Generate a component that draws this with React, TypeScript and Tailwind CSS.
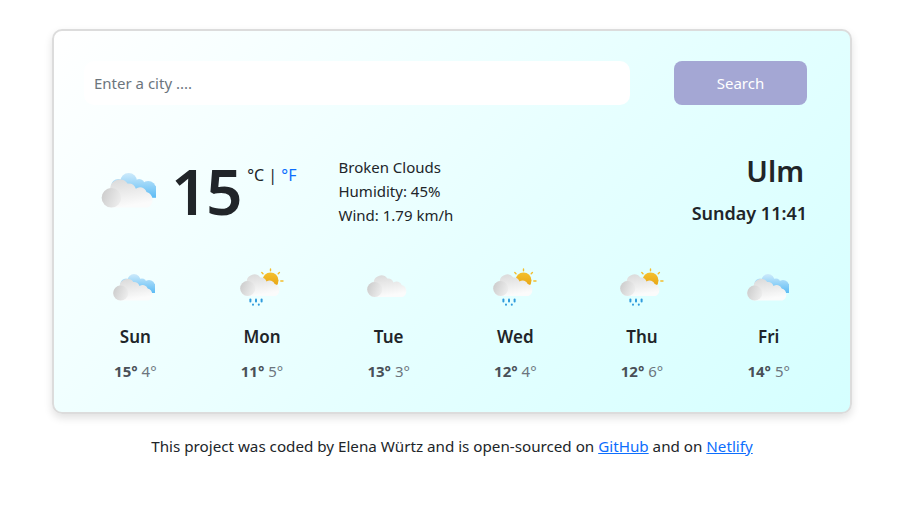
import React from 'react';

const Defs = () => (
    <svg width="0" height="0" className="absolute">
        <defs>
            <linearGradient id="blue" gradientUnits="userSpaceOnUse" x1="0" y1="7" x2="0" y2="25">
                <stop offset="0" stopColor="#cdeafb" />
                <stop offset="1" stopColor="#62bef5" />
            </linearGradient>
            <linearGradient id="body" x1="0" y1="0" x2="0.3" y2="1">
                <stop offset="0" stopColor="#d8d8d8" />
                <stop offset="1" stopColor="#fbfbfb" />
            </linearGradient>
            <linearGradient id="puff" x1="0" y1="0" x2="1" y2="0.4">
                <stop offset="0" stopColor="#c9c9c9" />
                <stop offset="1" stopColor="#ebebeb" />
            </linearGradient>
            <linearGradient id="sun" x1="0" y1="0" x2="0" y2="1">
                <stop offset="0" stopColor="#f4c02e" />
                <stop offset="1" stopColor="#e69f10" />
            </linearGradient>
        </defs>
    </svg>
);

const Cloud: React.FC<{ dy?: number }> = ({ dy = 0 }) => (
    <g transform={`translate(0 ${dy})`}>
        <path
            fill="url(#body)"
            d="M8.7 29 a7.5 7.5 0 0 1 -1 -14.9 a7.5 7.5 0 0 1 13.6 -3.5 a6 6 0 0 1 6.2 4 a5.2 5.2 0 0 1 8.2 2.4 a6.4 6.4 0 0 1 0.8 12 Z"
        />
        <circle cx="8.7" cy="21.5" r="7.5" fill="url(#puff)" />
    </g>
);

const BlueCloud = () => (
    <g fill="url(#blue)">
        <circle cx="22" cy="13.5" r="6.5" />
        <circle cx="14" cy="17" r="5.5" />
        <circle cx="30" cy="16" r="4.5" />
        <circle cx="37" cy="19" r="6" />
        <rect x="14" y="17" width="29" height="9" />
    </g>
);

const Sun = () => (
    <g stroke="#f4bd2c" strokeWidth="1.4" strokeLinecap="round">
        <line x1="31.5" y1="2" x2="31.5" y2="3.8" />
        <line x1="22.8" y1="5.5" x2="24" y2="6.7" />
        <line x1="40.4" y1="5.5" x2="39.2" y2="6.7" />
        <line x1="41.8" y1="14" x2="44" y2="14" />
        <circle cx="31.5" cy="13.5" r="8" fill="url(#sun)" stroke="none" />
    </g>
);

const Rain = () => (
    <g fill="#2f9bdc">
        <rect x="10.4" y="31.5" width="2" height="4" rx="1" />
        <rect x="16" y="31.5" width="2" height="4" rx="1" />
        <rect x="21.6" y="31.5" width="2" height="4" rx="1" />
        <rect x="13" y="36.5" width="2" height="2.2" rx="1" />
        <rect x="18.8" y="36.5" width="2" height="2.2" rx="1" />
    </g>
);

type Kind = 'broken' | 'rain' | 'cloud';

const WeatherIcon: React.FC<{ kind: Kind; className: string }> = ({ kind, className }) => (
    <svg viewBox="0 0 46 40" className={className}>
        {kind === 'broken' && (
            <>
                <BlueCloud />
                <Cloud dy={4.5} />
            </>
        )}
        {kind === 'rain' && (
            <>
                <Sun />
                <Cloud />
                <Rain />
            </>
        )}
        {kind === 'cloud' && <Cloud dy={1} />}
    </svg>
);

const forecast: { day: string; hi: number; lo: number; kind: Kind }[] = [
    { day: 'Sun', hi: 15, lo: 4, kind: 'broken' },
    { day: 'Mon', hi: 11, lo: 5, kind: 'rain' },
    { day: 'Tue', hi: 13, lo: 3, kind: 'cloud' },
    { day: 'Wed', hi: 12, lo: 4, kind: 'rain' },
    { day: 'Thu', hi: 12, lo: 6, kind: 'rain' },
    { day: 'Fri', hi: 14, lo: 5, kind: 'broken' },
];

export default function App() {
    return (
        <div className="h-[508px] overflow-hidden bg-white pt-[29px] font-['Noto_Sans','Open_Sans',sans-serif] text-[15px] text-[#212529]">
            <Defs />
            <div className="ml-[52px] h-[385px] w-[800px] rounded-[10px] border-2 border-[#dcdcdc] bg-[linear-gradient(135deg,#ffffff_0%,#e6ffff_55%,#d5ffff_100%)] pl-[30px] pr-[43px] pt-[30px] shadow-[0_4px_8px_rgba(0,0,0,0.12)]">
                <div className="flex h-[44px] gap-[44px]">
                    <div className="flex w-[546px] items-center rounded-[10px] bg-white pl-[10px] text-[#6c757d]">
                        Enter a city ....
                    </div>
                    <button className="w-[133px] rounded-[8px] bg-[#a4a7d4] text-white">Search</button>
                </div>

                <div className="mt-[45px] flex h-[88px] items-start">
                    <WeatherIcon kind="broken" className="ml-[16px] mt-[14px] h-[52px] w-[60px]" />
                    <div className="ml-[11px] -mt-[3px] text-[64px] font-semibold leading-[88px] tracking-[-1.5px]">15</div>
                    <div className="ml-[6px] mt-[12px] text-[16px] leading-[27px]">
                        °C | <span className="text-[#0d6efd]">°F</span>
                    </div>
                    <div className="ml-[42px] mt-[5px] leading-[24px]">
                        <div>Broken Clouds</div>
                        <div>Humidity: 45%</div>
                        <div>Wind: 1.79 km/h</div>
                    </div>
                    <div className="ml-auto text-right">
                        <div className="mr-[3px] mt-[1px] text-[29px] font-semibold leading-[40px]">Ulm</div>
                        <div className="mt-[10px] text-[18px] font-semibold leading-[24px]">Sunday 11:41</div>
                    </div>
                </div>

                <div className="-ml-[12px] mt-[29px] grid w-[760px] grid-cols-6">
                    {forecast.map(f => (
                        <div key={f.day} className="flex flex-col items-center">
                            <WeatherIcon kind={f.kind} className="h-[40px] w-[46px]" />
                            <div className="mt-[18px] text-[17px] font-semibold leading-[24px]">{f.day}</div>
                            <div className="mt-[10px] leading-[24px]">
                                <span className="font-bold text-[#495057]">{f.hi}°</span>{' '}
                                <span className="text-[#6c757d]">{f.lo}°</span>
                            </div>
                        </div>
                    ))}
                </div>
            </div>
            <p className="mt-[20px] ml-[52px] w-[800px] text-center text-[15.2px] leading-[24px]">
                This project was coded by Elena Würtz and is open-sourced on{' '}
                <a className="text-[#0d6efd] underline" href="#">GitHub</a> and on{' '}
                <a className="text-[#0d6efd] underline" href="#">Netlify</a>
            </p>
        </div>
    );
}
